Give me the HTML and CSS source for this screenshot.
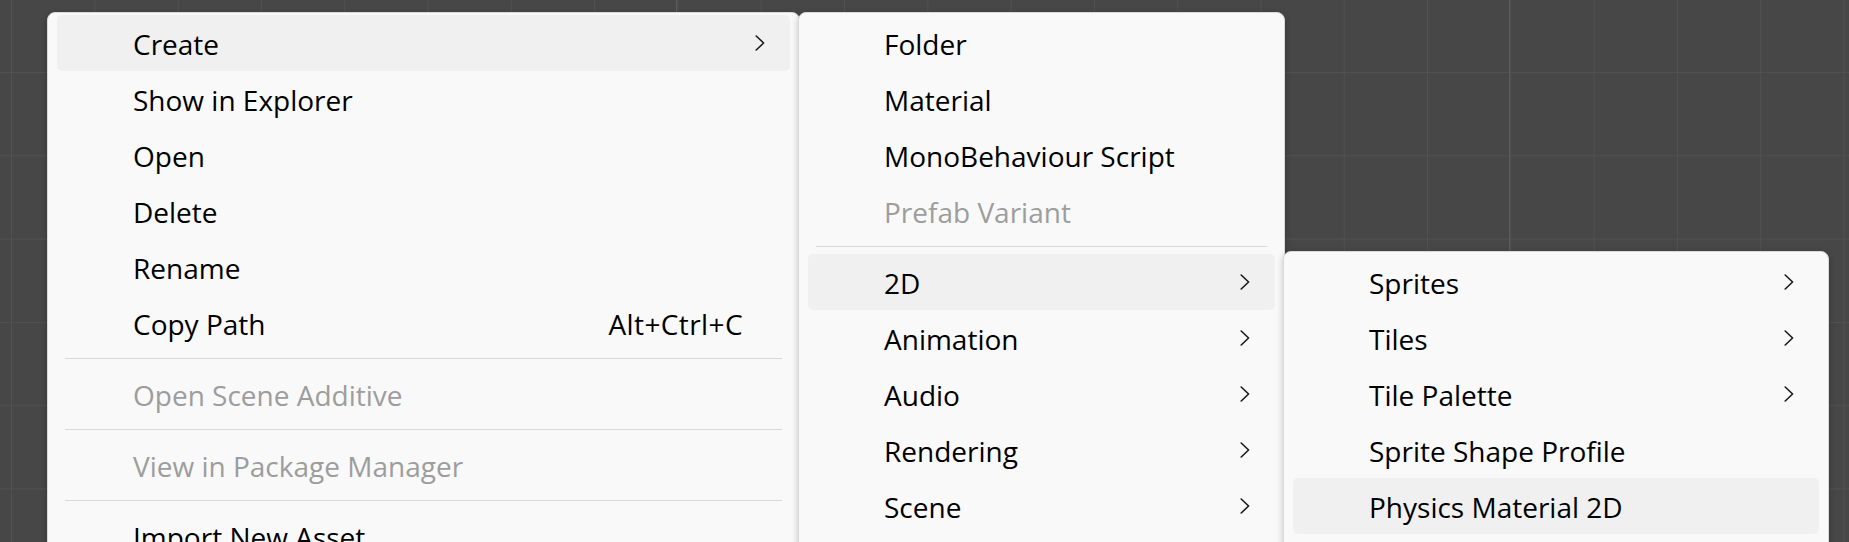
FILE: index.html
```html
<!DOCTYPE html>
<html lang="en">
<head>
<meta charset="utf-8">
<title>Context menu</title>
<link rel="stylesheet" href="styles.css">
</head>
<body>
<div class="canvas">
  <div class="menu menu-main">
    <div class="item active"><span class="label">Create</span><span class="arrow"><svg viewBox="0 0 10 16" width="10" height="16"><polyline points="1.2,1 8.6,8 1.2,15"/></svg></span></div>
    <div class="item"><span class="label">Show in Explorer</span><span class="arrow"></span></div>
    <div class="item"><span class="label">Open</span><span class="arrow"></span></div>
    <div class="item"><span class="label">Delete</span><span class="arrow"></span></div>
    <div class="item"><span class="label">Rename</span><span class="arrow"></span></div>
    <div class="item"><span class="label">Copy Path</span><span class="shortcut">Alt+Ctrl+C</span><span class="arrow"></span></div>
    <div class="sep"></div>
    <div class="item disabled"><span class="label">Open Scene Additive</span><span class="arrow"></span></div>
    <div class="sep"></div>
    <div class="item disabled"><span class="label">View in Package Manager</span><span class="arrow"></span></div>
    <div class="sep"></div>
    <div class="item"><span class="label">Import New Asset...</span><span class="arrow"></span></div>
  </div>

  <div class="menu menu-create">
    <div class="item"><span class="label">Folder</span><span class="arrow"></span></div>
    <div class="item"><span class="label">Material</span><span class="arrow"></span></div>
    <div class="item"><span class="label">MonoBehaviour Script</span><span class="arrow"></span></div>
    <div class="item disabled"><span class="label">Prefab Variant</span><span class="arrow"></span></div>
    <div class="sep"></div>
    <div class="item active"><span class="label">2D</span><span class="arrow"><svg viewBox="0 0 10 16" width="10" height="16"><polyline points="1.2,1 8.6,8 1.2,15"/></svg></span></div>
    <div class="item"><span class="label">Animation</span><span class="arrow"><svg viewBox="0 0 10 16" width="10" height="16"><polyline points="1.2,1 8.6,8 1.2,15"/></svg></span></div>
    <div class="item"><span class="label">Audio</span><span class="arrow"><svg viewBox="0 0 10 16" width="10" height="16"><polyline points="1.2,1 8.6,8 1.2,15"/></svg></span></div>
    <div class="item"><span class="label">Rendering</span><span class="arrow"><svg viewBox="0 0 10 16" width="10" height="16"><polyline points="1.2,1 8.6,8 1.2,15"/></svg></span></div>
    <div class="item"><span class="label">Scene</span><span class="arrow"><svg viewBox="0 0 10 16" width="10" height="16"><polyline points="1.2,1 8.6,8 1.2,15"/></svg></span></div>
  </div>

  <div class="menu menu-2d">
    <div class="item"><span class="label">Sprites</span><span class="arrow"><svg viewBox="0 0 10 16" width="10" height="16"><polyline points="1.2,1 8.6,8 1.2,15"/></svg></span></div>
    <div class="item"><span class="label">Tiles</span><span class="arrow"><svg viewBox="0 0 10 16" width="10" height="16"><polyline points="1.2,1 8.6,8 1.2,15"/></svg></span></div>
    <div class="item"><span class="label">Tile Palette</span><span class="arrow"><svg viewBox="0 0 10 16" width="10" height="16"><polyline points="1.2,1 8.6,8 1.2,15"/></svg></span></div>
    <div class="item"><span class="label">Sprite Shape Profile</span><span class="arrow"></span></div>
    <div class="item active"><span class="label">Physics Material 2D</span><span class="arrow"></span></div>
  </div>
</div>
</body>
</html>
```
FILE: styles.css
```css
html, body {
  margin: 0;
  padding: 0;
  height: 100%;
  overflow: hidden;
}

body {
  background-color: #474747;
  background-image:
    linear-gradient(to right, #5c5c5c 0, #5c5c5c 1px, transparent 1px),
    linear-gradient(to right, #515151 0, #515151 1px, transparent 1px),
    linear-gradient(to bottom, #515151 0, #515151 1px, transparent 1px);
  background-size: 833px 100%, 83.3px 83.3px, 83.3px 83.3px;
  background-position: 676px 0, 11px 0, 0 72px;
  font-family: "Open Sans", "Noto Sans", sans-serif;
  font-size: 28px;
  color: #000;
}

.canvas {
  position: relative;
  width: 1849px;
  height: 542px;
}

.menu {
  position: absolute;
  box-sizing: border-box;
  display: flex;
  flex-direction: column;
  background: #f9f9f9;
  border: 1px solid #d9d9d9;
  border-radius: 8px;
  padding: 2px 9px 60px;
  box-shadow: 0 2px 7px rgba(0, 0, 0, 0.22);
}

.menu-main {
  left: 47px;
  top: 12px;
  width: 753px;
}

.menu-create {
  left: 798px;
  top: 12px;
  width: 487px;
}

.menu-2d {
  left: 1283px;
  top: 251px;
  width: 546px;
}

.item {
  display: flex;
  align-items: center;
  height: 56px;
  padding: 0 25px 0 76px;
  border-radius: 5px;
  white-space: nowrap;
  line-height: 1;
}

.item.active {
  background: #f0f0f0;
}

.item.disabled {
  color: #9d9d9d;
}

.label {
  flex: 1;
  padding-top: 1px;
}

.shortcut {
  margin-right: 12px;
  padding-top: 1px;
  letter-spacing: 0.4px;
}

.arrow {
  width: 10px;
  height: 16px;
  display: flex;
}

.arrow svg {
  display: block;
  fill: none;
  stroke: #1a1a1a;
  stroke-width: 1.6;
  stroke-linecap: round;
  stroke-linejoin: round;
}

.sep {
  height: 1px;
  margin: 7px 8px;
  background: #d9d9d9;
}
```
